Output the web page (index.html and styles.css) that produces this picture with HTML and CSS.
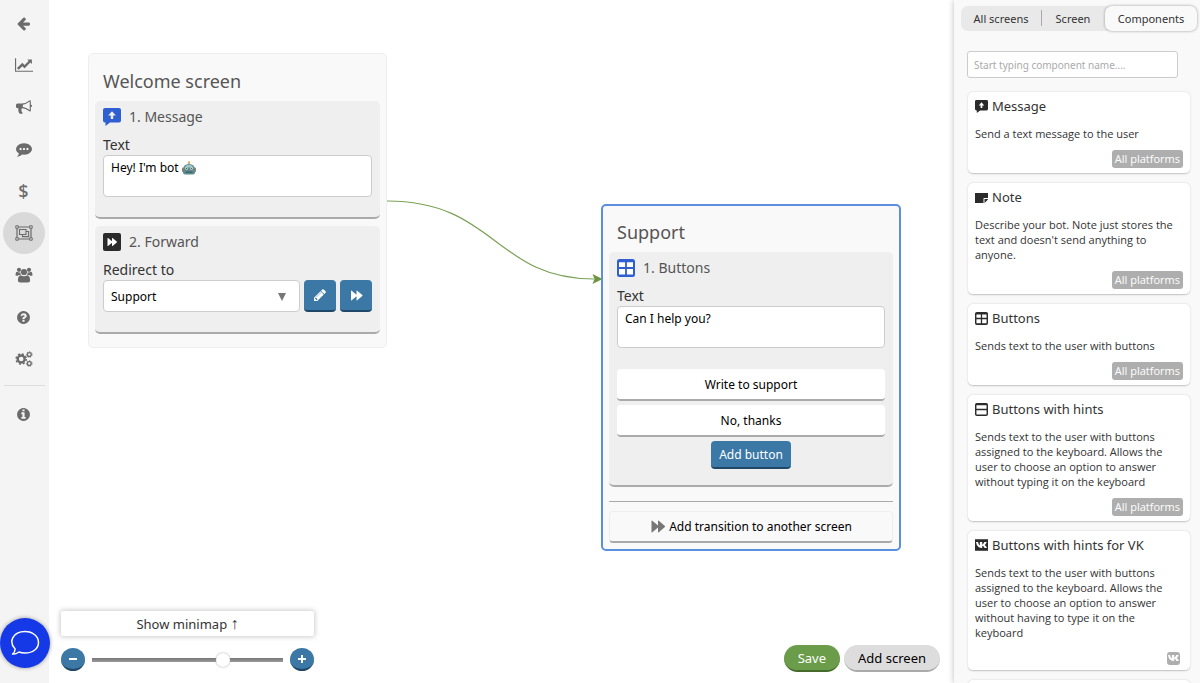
FILE: index.html
```html
<!DOCTYPE html>
<html lang="en">
<head>
<meta charset="utf-8">
<title>Bot editor</title>
<link rel="stylesheet" href="styles.css">
</head>
<body>
<svg class="defs" aria-hidden="true">
  <symbol id="forward" viewBox="0 0 16 14"><path d="M1 1.2 Q1 .2 1.9 .9 L8 6 V1.2 Q8 .2 8.900 .9 L15.400 6.400 Q16 7 15.400 7.600 L8.900 13.100 Q8 13.800 8 12.800 V8 L1.900 13.100 Q1 13.800 1 12.800Z"/></symbol>
  <symbol id="bubble-up" viewBox="0 0 18 18"><path fill-rule="evenodd" d="M2 0H16Q18 0 18 2V12.500Q18 14.500 16 14.500H7L2.500 18V14.500H2Q0 14.500 0 12.500V2Q0 0 2 0ZM9 3.200L5.200 7.500H7.800V11H10.200V7.500H12.800Z"/></symbol>
  <symbol id="grid" viewBox="0 0 18 18"><path fill-rule="evenodd" d="M2.500 0H15.500Q18 0 18 2.500V15.500Q18 18 15.500 18H2.500Q0 18 0 15.500V2.500Q0 0 2.500 0ZM2 3.300V8H8.100V3.300ZM9.900 3.300V8H16V3.300ZM2 9.900V15.500H8.100V9.900ZM9.900 9.900V15.500H16V9.900Z"/></symbol>
  <symbol id="rows" viewBox="0 0 18 18"><path fill-rule="evenodd" d="M2.500 0H15.500Q18 0 18 2.500V15.500Q18 18 15.500 18H2.500Q0 18 0 15.500V2.500Q0 0 2.500 0ZM2 3V8H16V3ZM2 10V15.800H16V10Z"/></symbol>
  <symbol id="vk" viewBox="0 0 18 16"><path d="M1.500 4H4.200C4.700 6.600 5.700 8.200 6.700 8.700V4H10V7.500C11.300 7 12.300 5.500 12.900 4H16.200C15.600 5.900 14.600 7.200 13.400 8.100C14.800 9 15.900 10.300 16.600 12.200H13.200C12.600 10.600 11.500 9.500 10 9.100V12.200H9C5 12.200 2 9.200 1.500 4Z"/></symbol>
</svg>
<div class="app">
  <nav class="rail" aria-label="Main">
    <a class="rail-link" href="#" aria-label="Back"><svg width="15" height="15" viewBox="0 0 1792 1792"><path d="M1664 896v128q0 53-32.500 90.500t-84.500 37.500h-704l293 294q38 36 38 90t-38 90l-75 76q-37 37-90 37-52 0-91-37l-651-652q-37-37-37-90 0-52 37-91l651-650q38-38 91-38 52 0 90 38l75 74q38 38 38 91t-38 91l-293 293h704q52 0 84.500 37.500t32.500 90.500z"/></svg></a>
    <a class="rail-link" href="#" aria-label="Statistics"><svg width="18" height="16" viewBox="0 0 2048 1792"><path d="M2048 1536v128h-2048v-1536h128v1408h1920zm-128-1248v435q0 21-19.500 29.500t-35.500-7.500l-121-121-633 633q-10 10-23 10t-23-10l-233-233-416 416-192-192 585-585q10-10 23-10t23 10l233 233 464-464-121-121q-16-16-7.500-35.500t29.500-19.500h435q14 0 23 9t9 23z"/></svg></a>
    <a class="rail-link" href="#" aria-label="Broadcasts"><svg width="16" height="16" viewBox="0 0 1792 1792"><path d="M1664 640q53 0 90.500 37.500t37.500 90.500-37.500 90.500-90.500 37.500v384q0 52-38 90t-90 38q-417-347-812-380-58 19-91 66t-31 100.500 40 92.500q-20 33-23 65.500t6 58 33.500 55 48 50 61.500 50.500q-29 58-111.500 83t-168.500 11.500-132-55.500q-7-23-29.500-87.500t-32-94.500-23-89-15-101 3.500-98.500 22-110.500h-122q-66 0-113-47t-47-113v-192q0-66 47-113t113-47h480q435 0 896-384 52 0 90 38t38 90v384zm-128 604v-954q-394 302-768 343v270q377 42 768 341z"/></svg></a>
    <a class="rail-link" href="#" aria-label="Chats"><svg width="16" height="16" viewBox="0 0 1792 1792"><path d="M640 896q0-53-37.500-90.500t-90.500-37.500-90.500 37.500-37.500 90.500 37.500 90.500 90.500 37.500 90.500-37.500 37.500-90.500zm384 0q0-53-37.500-90.500t-90.500-37.500-90.500 37.500-37.500 90.500 37.500 90.500 90.500 37.500 90.500-37.500 37.500-90.500zm384 0q0-53-37.500-90.500t-90.500-37.500-90.500 37.500-37.500 90.500 37.500 90.500 90.500 37.500 90.500-37.500 37.500-90.500zm384 0q0 174-120 321.500t-326 233-450 85.500q-110 0-211-18-173 173-435 229-52 10-86 13-12 1-22-6t-13-18q-4-15 20-37 5-5 23.500-21.500t25.500-23.500 23.500-25.500 24-31.500 20.500-37 20-48 14.500-57.500 12.500-72.500q-146-90-229.500-216.500t-83.500-269.500q0-174 120-321.500t326-233 450-85.500 450 85.500 326 233 120 321.500z"/></svg></a>
    <a class="rail-link rail-dollar" href="#" aria-label="Payments">$</a>
    <a class="rail-link is-active" href="#" aria-label="Constructor"><svg width="18" height="16" viewBox="0 0 18 16"><g fill="none" stroke="#6b6b6b"><path stroke-width="1.200" d="M3.500 2H14.500M3.500 14H14.500M2 3.500V12.500M16 3.500V12.500"/><path stroke-width="1.100" d="M4.500 4.500H11V9.500H4.500ZM11 6.500H13.600V11.600H7.500V9.500"/><path d="M.8 .8H3.300V3.300H.8ZM14.700 .8H17.200V3.300H14.700ZM.8 12.700H3.300V15.200H.8ZM14.700 12.700H17.200V15.200H14.700Z"/></g></svg></a>
    <a class="rail-link" href="#" aria-label="Users"><svg width="18" height="16" viewBox="0 0 18 16"><circle cx="4" cy="2.800" r="2.100"/><circle cx="14" cy="2.800" r="2.100"/><circle cx="9" cy="5" r="3.100"/><path d="M.6 8.300V7Q.8 4.800 2 4.800Q4 6 5.300 5.300Q5.300 7 6 8H4Q3.200 8.300 2.900 8.800H1.500Q.8 8.800 .6 8.300ZM17.400 8.300V7Q17.200 4.800 16 4.800Q14 6 12.700 5.300Q12.700 7 12 8H14Q14.800 8.300 15.100 8.800H16.500Q17.200 8.800 17.400 8.300ZM2.900 13.500Q2.900 8.500 5.700 8.300Q9 10.300 12.300 8.300Q15.100 8.500 15.100 13.500Q15.100 15.500 13 15.500H5Q2.900 15.500 2.900 13.500Z"/></svg></a>
    <a class="rail-link" href="#" aria-label="Help"><svg width="15" height="15" viewBox="0 0 1792 1792"><path d="M1024 1376v-192q0-14-9-23t-23-9h-192q-14 0-23 9t-9 23v192q0 14 9 23t23 9h192q14 0 23-9t9-23zm256-672q0-88-55.500-163t-138.500-116-170-41q-243 0-371 213-15 24 8 42l132 100q7 6 19 6 16 0 25-12 53-68 86-92 34-24 86-24 48 0 85.500 26t37.500 59q0 38-20 61t-68 45q-63 28-115.500 86.500t-52.500 125.500v36q0 14 9 23t23 9h192q14 0 23-9t9-23q0-19 21.500-49.500t54.500-49.500q32-18 49-28.500t46-35 44.500-48 28-60.500 12.500-81zm384 192q0 209-103 385.500t-279.500 279.500-385.500 103-385.500-103-279.500-279.500-103-385.500 103-385.500 279.500-279.500 385.500-103 385.500 103 279.500 279.500 103 385.500z"/></svg></a>
    <a class="rail-link" href="#" aria-label="Settings"><svg width="18" height="16" viewBox="0 0 18 16"><g fill="none" stroke="#6b6b6b"><circle cx="6.200" cy="8" r="3.500" stroke-width="2.400"/><circle cx="6.200" cy="8" r="5.100" stroke-width="1.400" stroke-dasharray="2.100 1.905"/><circle cx="14.300" cy="3.500" r="1.900" stroke-width="1.300"/><circle cx="14.300" cy="3.500" r="2.800" stroke-width="1" stroke-dasharray="1.250 1.260"/><circle cx="14.300" cy="12.500" r="1.900" stroke-width="1.300"/><circle cx="14.300" cy="12.500" r="2.800" stroke-width="1" stroke-dasharray="1.250 1.260"/></g></svg></a>
    <hr class="rail-rule">
    <a class="rail-link" href="#" aria-label="Information"><svg width="15" height="15" viewBox="0 0 1792 1792"><path d="M1152 1376v-160q0-14-9-23t-23-9h-96v-512q0-14-9-23t-23-9h-320q-14 0-23 9t-9 23v160q0 14 9 23t23 9h96v320h-96q-14 0-23 9t-9 23v160q0 14 9 23t23 9h448q14 0 23-9t9-23zm-128-896v-160q0-14-9-23t-23-9h-192q-14 0-23 9t-9 23v160q0 14 9 23t23 9h192q14 0 23-9t9-23zm640 416q0 209-103 385.500t-279.500 279.500-385.500 103-385.500-103-279.500-279.500-103-385.500 103-385.500 279.500-279.500 385.500-103 385.500 103 279.500 279.500 103 385.500z"/></svg></a>
  </nav>

  <main class="canvas">
    <svg class="wire" width="600" height="400" viewBox="0 0 600 400" aria-hidden="true"><path d="M338 201C446 201 446 279 545 279" fill="none" stroke="#7ba256" stroke-width="1.200"/><path d="M543.500 274L553.500 279L543.500 284L545.500 279Z" fill="#6b963f"/></svg>

    <section class="node node-welcome">
      <h2 class="node-title">Welcome screen</h2>
      <div class="block">
        <h3 class="block-head"><svg class="icon-blue" width="18" height="18"><use href="#bubble-up"/></svg>1. Message</h3>
        <label class="block-label" for="welcome-text">Text</label>
        <div class="text-wrap">
          <textarea class="field area" id="welcome-text">Hey! I'm bot</textarea>
          <svg class="robot" width="14" height="14" viewBox="0 0 14 14" role="img" aria-label="robot"><circle cx="7" cy="1.300" r="1.100" fill="#e9a13c"/><path d="M6.500 2H7.500V4H6.500Z" fill="#8a7760"/><rect x="0" y="6.500" width="2" height="4.500" rx="1" fill="#b06a4e"/><rect x="12" y="6.500" width="2" height="4.500" rx="1" fill="#b06a4e"/><path d="M1 9Q1 3 7 3T13 9V11.500Q13 13.500 11 13.500H3Q1 13.500 1 11.500Z" fill="#5c8f93"/><path d="M2.500 6.500Q4 3.700 7 3.700T11.500 6.500Z" fill="#a6c6c6"/><circle cx="4.500" cy="7.500" r="1.300" fill="#c4dede"/><circle cx="9.500" cy="7.500" r="1.300" fill="#c4dede"/><circle cx="4.500" cy="7.500" r=".6" fill="#445"/><circle cx="9.500" cy="7.500" r=".6" fill="#445"/><path d="M6.300 9.500L7 8.300L7.700 9.500Z" fill="#c0524a"/><path d="M3.500 10.500H10.500V12H3.500Z" fill="#3f656b"/></svg>
        </div>
      </div>
      <div class="block">
        <h3 class="block-head"><svg width="18" height="18" viewBox="0 0 18 18"><rect width="18" height="18" rx="2" fill="#2b2b2b"/><use href="#forward" x="3.500" y="4.500" width="11" height="9" fill="#fff"/></svg>2. Forward</h3>
        <label class="block-label" for="redirect">Redirect to</label>
        <div class="redirect-row">
          <div class="select-wrap">
            <select class="field select" id="redirect"><option>Support</option></select>
            <svg class="caret" width="8" height="8" viewBox="0 0 8 8" aria-hidden="true"><path d="M0 0H8L4 8Z"/></svg>
          </div>
          <button class="btn-square" type="button" aria-label="Edit"><svg width="14" height="14" viewBox="0 0 1792 1792"><path d="M491 1536l91-91-235-235-91 91v107h128v128h107zm523-928q0-22-22-22-10 0-17 7l-542 542q-7 7-7 17 0 22 22 22 10 0 17-7l542-542q7-7 7-17zm-54-192l416 416-832 832h-416v-416zm683 96q0 53-37 90l-166 166-416-416 166-165q36-38 90-38 53 0 91 38l235 234q37 39 37 91z"/></svg></button>
          <button class="btn-square" type="button" aria-label="Go to screen"><svg width="13" height="11"><use href="#forward"/></svg></button>
        </div>
      </div>
    </section>

    <section class="node node-support">
      <h2 class="node-title">Support</h2>
      <div class="block">
        <h3 class="block-head"><svg class="icon-blue" width="18" height="18"><rect x="1" y="1" width="16" height="16" fill="#fff"/><use href="#grid"/></svg>1. Buttons</h3>
        <label class="block-label" for="support-text">Text</label>
        <textarea class="field area" id="support-text">Can I help you?</textarea>
        <div class="replies">
          <button class="reply" type="button">Write to support</button>
          <button class="reply" type="button">No, thanks</button>
          <button class="btn-add" type="button">Add button</button>
        </div>
      </div>
      <hr class="node-rule">
      <button class="btn-transition" type="button"><svg width="16" height="13"><use href="#forward"/></svg>Add transition to another screen</button>
    </section>

    <div class="map-tools">
      <button class="btn-minimap" type="button">Show minimap <span class="arrow">↑</span></button>
      <div class="zoom">
        <button class="btn-round" type="button" aria-label="Zoom out"><svg width="8" height="8" viewBox="0 0 8 8"><path d="M0 3H8V5H0Z"/></svg></button>
        <input class="zoom-range" type="range" min="0" max="100" value="70" aria-label="Zoom">
        <button class="btn-round" type="button" aria-label="Zoom in"><svg width="8" height="8" viewBox="0 0 8 8"><path d="M0 3H3V0H5V3H8V5H5V8H3V5H0Z"/></svg></button>
      </div>
    </div>
    <div class="actions">
      <button class="pill pill-save" type="button">Save</button>
      <button class="pill" type="button">Add screen</button>
    </div>
  </main>

  <aside class="panel">
    <div class="tabs">
      <button class="tab" type="button">All screens</button>
      <button class="tab tab-divided" type="button">Screen</button>
      <button class="tab is-current" type="button">Components</button>
    </div>
    <input class="search" type="text" placeholder="Start typing component name...." aria-label="Component name">
    <div class="cards">
      <article class="card">
        <h3 class="card-title"><svg width="13" height="13"><use href="#bubble-up"/></svg>Message</h3>
        <p class="card-text">Send a text message to the user</p>
        <span class="badge">All platforms</span>
      </article>
      <article class="card">
        <h3 class="card-title"><svg width="13" height="13" viewBox="0 0 13 13"><path d="M0 2H13V7H9Q8.500 7 8.500 7.500V12H0ZM9.500 12V8H13V8.500Z"/></svg>Note</h3>
        <p class="card-text">Describe your bot. Note just stores the text and doesn't send anything to anyone.</p>
        <span class="badge">All platforms</span>
      </article>
      <article class="card">
        <h3 class="card-title"><svg width="13" height="13"><use href="#grid"/></svg>Buttons</h3>
        <p class="card-text">Sends text to the user with buttons</p>
        <span class="badge">All platforms</span>
      </article>
      <article class="card">
        <h3 class="card-title"><svg width="13" height="13"><use href="#rows"/></svg>Buttons with hints</h3>
        <p class="card-text">Sends text to the user with buttons assigned to the keyboard. Allows the user to choose an option to answer without typing it on the keyboard</p>
        <span class="badge">All platforms</span>
      </article>
      <article class="card">
        <h3 class="card-title"><svg width="13" height="12" viewBox="0 0 18 16"><path d="M0 0H18V16H0Z"/><use href="#vk" fill="#fff"/></svg>Buttons with hints for VK</h3>
        <p class="card-text">Sends text to the user with buttons assigned to the keyboard. Allows the user to choose an option to answer without having to type it on the keyboard</p>
        <span class="badge badge-icon"><svg width="13" height="12" role="img" aria-label="VK"><use href="#vk" fill="#fff"/></svg></span>
      </article>
      <article class="card"><h3 class="card-title">&nbsp;</h3></article>
    </div>
  </aside>
</div>
<button class="chat" type="button" aria-label="Open chat"><svg width="30" height="26" viewBox="0 0 30 26" fill="none" stroke="#fff" stroke-width="1.500" stroke-linejoin="round"><path d="M5 18.800C-1.500 12 2.500 1.500 15 1.500C23 1.500 28.500 6.500 28.500 12.500C28.500 18.500 23 23 15 23C12.500 23 10.500 22.600 9 22C6.500 23.800 4.500 24.300 2.500 24C4.500 22.500 5.200 20.800 5 18.800Z"/></svg></button>
</body>
</html>
```
FILE: styles.css
```css
* { box-sizing: border-box; }
body {
  margin: 0;
  overflow: hidden;
  color: #333;
  background: #fff;
  font-family: "Noto Sans", "Open Sans", sans-serif;
}
button, input, textarea, select { font-family: inherit; margin: 0; }
button { cursor: pointer; border: 0; padding: 0; color: #000; }
h2, h3, p { margin: 0; font-weight: 400; }
svg { display: block; flex: none; }
.defs { display: none; }
.app { display: flex; height: 100vh; }

/* Left rail */
.rail {
  flex: none;
  width: 49px;
  padding-top: 2px;
  display: flex;
  flex-direction: column;
  align-items: center;
  background: #f4f4f4;
}
.rail-link {
  width: 42px;
  height: 42px;
  margin-right: 2px;
  flex: none;
  display: grid;
  place-items: center;
  border-radius: 50%;
  fill: #6b6b6b;
  color: #6b6b6b;
  text-decoration: none;
}
.rail-dollar { font-size: 18px; font-weight: 500; line-height: 20px; }
.rail-link.is-active { background: #d9d9d9; }
.rail-rule {
  width: 41px;
  margin: 5px 0 7px;
  border: 0;
  border-top: 1px solid #ddd;
}

/* Canvas */
.canvas { position: relative; flex: 1; min-width: 0; overflow: hidden; }
.wire { position: absolute; left: 0; top: 0; }
.node {
  position: absolute;
  width: 300px;
  border: 1px solid #eee;
  border-radius: 5px;
  background: #f9f9f9;
}
.node-welcome { left: 39px; top: 53px; width: 299px; padding: 14px 6px 13px; }
.node-support {
  left: 552px;
  top: 204px;
  padding: 13px 6px 6px;
  border: 2px solid #5b8fdc;
}
.node-title {
  margin: 0 8px 7px;
  font-size: 18px;
  line-height: 26px;
  color: #555;
}
.block {
  padding: 4px 8px 20px;
  border-bottom: 2px solid #aaa;
  border-radius: 5px;
  background: #efefef;
}
.block + .block { margin-top: 7px; }
.node-support .block { padding-bottom: 16px; }
.block-head {
  display: flex;
  align-items: center;
  gap: 8px;
  margin-bottom: 6px;
  font-size: 14px;
  line-height: 24px;
  color: #555;
}
.icon-blue { fill: #2f5fd0; }
.block-label { display: block; font-size: 14px; line-height: 20px; }
.field {
  display: block;
  width: 100%;
  border: 1px solid #ccc;
  border-radius: 4px;
  background: #fff;
  color: #000;
  font-size: 12px;
}
.area { height: 42px; padding: 4px 7px; line-height: 16px; resize: none; overflow: hidden; }
.text-wrap, .select-wrap { position: relative; }
.robot { position: absolute; left: 79px; top: 6px; }
.redirect-row { display: flex; gap: 4px; }
.select-wrap { flex: 1; }
.select { height: 32px; padding: 0 7px; appearance: none; }
.caret { position: absolute; right: 14px; top: 13px; fill: #777; }
.btn-square {
  width: 32px;
  height: 32px;
  display: grid;
  place-items: center;
  border-radius: 4px;
  border-bottom: 2px solid #1f4868;
  background: #3b78a6;
  fill: #fff;
}
.replies { display: flex; flex-direction: column; gap: 4px; margin-top: 21px; }
.reply {
  height: 32px;
  border-radius: 4px;
  border-bottom: 2px solid #aaa;
  background: #fff;
  font-size: 12px;
}
.btn-add {
  align-self: center;
  height: 28px;
  padding: 0 8px;
  border-radius: 4px;
  border-bottom: 2px solid #1f4868;
  background: #3b78a6;
  color: #fff;
  font-size: 12px;
}
.node-rule { margin: 14px 0 9px; border: 0; border-top: 1px solid #aaa; }
.btn-transition {
  width: 100%;
  height: 32px;
  display: flex;
  align-items: center;
  justify-content: center;
  gap: 3px;
  border: 1px solid #eee;
  border-bottom: 2px solid #aaa;
  border-radius: 4px;
  background: #f9f9f9;
  font-size: 12px;
}
.btn-transition svg { fill: #777; }

/* Bottom controls */
.map-tools { position: absolute; left: 12px; bottom: 12px; width: 253px; }
.btn-minimap {
  width: 100%;
  height: 25px;
  margin-bottom: 12px;
  border-radius: 2px;
  background: #fff;
  box-shadow: 0 0 5px 1px #ccc;
  color: #333;
  font-size: 13px;
  line-height: 24px;
}
.arrow { font-size: 16px; line-height: 16px; }
.zoom { display: flex; align-items: center; gap: 7px; }
.btn-round {
  flex: none;
  width: 24px;
  height: 23px;
  display: grid;
  place-items: center;
  border-radius: 50%;
  border-bottom: 2px solid #1f4868;
  background: #3b78a6;
  fill: #fff;
}
.zoom-range {
  flex: 1;
  min-width: 0;
  height: 14px;
  appearance: none;
  background: linear-gradient(#777, #999) center / 100% 4px no-repeat;
}
.zoom-range::-webkit-slider-thumb {
  appearance: none;
  width: 14px;
  height: 14px;
  border-radius: 50%;
  background: #fff;
  box-shadow: 0 0 2px #999;
}
.actions { position: absolute; right: 14px; bottom: 11px; display: flex; gap: 4px; }
.pill {
  height: 27px;
  padding: 0 14px;
  border-radius: 14px;
  border-bottom: 2px solid #aaa;
  background: #ddd;
  font-size: 13px;
}
.pill-save { background: #6a9c49; border-bottom-color: #456b2c; color: #fff; }

/* Right panel */
.panel {
  position: relative;
  flex: none;
  width: 246px;
  padding: 6px 3px 0 7px;
  overflow: hidden;
  background: #f9f9f9;
  box-shadow: 0 0 6px #bbb;
}
.tabs {
  display: grid;
  grid-template-columns: 80fr 64fr 92fr;
  height: 25px;
  border-radius: 7px;
  background: #e9e9e9;
}
.tab {
  position: relative;
  background: none;
  border-radius: 7px;
  color: #333;
  font-size: 11px;
}
.tab-divided::before {
  content: "";
  position: absolute;
  left: 0;
  top: 4px;
  bottom: 5px;
  border-left: 1px solid #aaa;
}
.tab.is-current { background: #f9f9f9; box-shadow: 0 0 3px #999; }
.search {
  display: block;
  width: 211px;
  height: 27px;
  margin: 20px 0 14px 6px;
  padding: 0 6px;
  border: 1px solid #ccc;
  border-radius: 3px;
  background: #fff;
  font-size: 10px;
}
.search::placeholder { color: #aaa; }
.cards {
  display: flex;
  flex-direction: column;
  gap: 9px;
  padding: 0 7px;
  font-family: "Open Sans", "Noto Sans", sans-serif;
}
.card {
  display: flex;
  flex-direction: column;
  padding: 4px 7px 5px;
  border-radius: 5px;
  border-bottom: 1px solid #ccc;
  background: #fff;
  box-shadow: 0 0 2px #ccc;
}
.card-title {
  display: flex;
  align-items: center;
  gap: 4px;
  margin-bottom: 10px;
  font-family: "Noto Sans", "Open Sans", sans-serif;
  font-size: 13px;
  line-height: 20px;
}
.card-title svg { fill: #2b2b2b; }
.card-text { margin-bottom: 9px; font-size: 11px; line-height: 15px; }
.badge {
  align-self: flex-end;
  height: 18px;
  padding: 0 3px;
  border-radius: 3px;
  background: #aeaeae;
  color: #fff;
  font-size: 11px;
  line-height: 18px;
}
.badge-icon { height: 13px; margin: 3px 3px 0 0; padding: 0; }

/* Chat launcher */
.chat {
  position: absolute;
  left: 0;
  bottom: 15px;
  width: 50px;
  height: 50px;
  display: grid;
  place-items: center;
  border-radius: 50%;
  background: #1539e6;
  box-shadow: 0 0 4px #999;
}
```
